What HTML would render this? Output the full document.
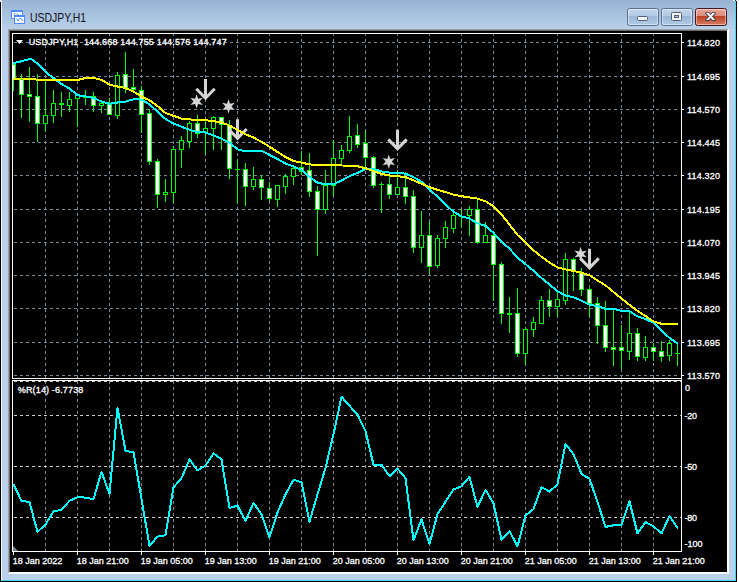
<!DOCTYPE html><html><head><meta charset="utf-8"><title>USDJPY,H1</title>
<style>html,body{margin:0;padding:0;background:#fff;overflow:hidden}svg{display:block}text{font-family:"Liberation Sans",Arial,sans-serif}</style></head><body>
<svg width="739" height="582" viewBox="0 0 739 582">
<defs>
<linearGradient id="tg" x1="0" y1="0" x2="0" y2="1"><stop offset="0" stop-color="#98b4d4"/><stop offset="1" stop-color="#b9d1ea"/></linearGradient>
<linearGradient id="bg" x1="0" y1="0" x2="0" y2="1"><stop offset="0" stop-color="#c4d7ec"/><stop offset="0.43" stop-color="#b3cae3"/><stop offset="0.47" stop-color="#9bb7d7"/><stop offset="1" stop-color="#b2cbe6"/></linearGradient>
<linearGradient id="cg" x1="0" y1="0" x2="0" y2="1"><stop offset="0" stop-color="#eaaa9b"/><stop offset="0.43" stop-color="#dc8b79"/><stop offset="0.47" stop-color="#bf4122"/><stop offset="1" stop-color="#d58068"/></linearGradient>
<clipPath id="cm"><rect x="13" y="34" width="668" height="344"/></clipPath>
<clipPath id="cs"><rect x="13" y="381" width="668" height="170"/></clipPath>
</defs>
<rect x="0" y="0" width="739" height="582" fill="#ffffff"/>
<rect x="0" y="0" width="737" height="582" fill="#000"/>
<rect x="1" y="0" width="735" height="581" fill="#b9d1ea"/>
<rect x="1" y="0" width="735" height="30" fill="url(#tg)"/>
<rect x="1" y="0" width="1" height="581" fill="#f4f8fc"/>
<rect x="735" y="1" width="1" height="580" fill="#3fd9f5"/>
<rect x="1" y="580" width="735" height="1" fill="#3fd9f5"/>
<rect x="0" y="0" width="2" height="2" fill="#dfe8f2"/>
<rect x="736" y="0" width="1" height="1" fill="#ffffff"/><rect x="735" y="0" width="1" height="1" fill="#223"/><rect x="733" y="0" width="2" height="1" fill="#d5f3fb"/>
<rect x="8" y="29" width="721" height="545" fill="#ffffff"/>
<rect x="8" y="29" width="720" height="544" fill="#a0a0a0"/>
<rect x="9" y="30" width="719" height="543" fill="#e3e3e3"/>
<rect x="9" y="30" width="718" height="542" fill="#696969"/>
<rect x="10" y="31" width="717" height="541" fill="#000"/>
<rect x="727" y="30" width="2" height="544" fill="#ffffff"/>
<rect x="9" y="572" width="720" height="2" fill="#ffffff"/>
<g shape-rendering="crispEdges">
<rect x="11" y="10" width="12" height="9" fill="#4c8bff"/><rect x="12" y="12" width="10" height="6" fill="#fff"/>
<rect x="14" y="15" width="11" height="9" fill="#4c8bff"/><rect x="15" y="17" width="9" height="6" fill="#fff"/>
</g>
<path d="M13.5 14.5 l1.5 -1 l1 1 M17 13.5 l1.5 1.5" stroke="#4c8bff" stroke-width="1" fill="none"/>
<path d="M16.5 18.5 l1.5 2.5 l1.5 -2.5 l1.5 0 l1.5 2.5" stroke="#4c8bff" stroke-width="1" fill="none"/>
<text x="30" y="22" font-size="12.5" fill="#101020" textLength="56" lengthAdjust="spacingAndGlyphs">USDJPY,H1</text>
<rect x="627.5" y="8.5" width="31" height="17" rx="2" ry="2" fill="url(#bg)" stroke="#5b7190" stroke-width="1"/>
<rect x="628.5" y="9.5" width="29" height="15" rx="1.5" ry="1.5" fill="none" stroke="#ffffff" stroke-opacity="0.45" stroke-width="1"/>
<rect x="661.5" y="8.5" width="31" height="17" rx="2" ry="2" fill="url(#bg)" stroke="#5b7190" stroke-width="1"/>
<rect x="662.5" y="9.5" width="29" height="15" rx="1.5" ry="1.5" fill="none" stroke="#ffffff" stroke-opacity="0.45" stroke-width="1"/>
<rect x="695.5" y="8.5" width="31" height="17" rx="2" ry="2" fill="url(#cg)" stroke="#4a1420" stroke-width="1"/>
<rect x="696.5" y="9.5" width="29" height="15" rx="1.5" ry="1.5" fill="none" stroke="#ffffff" stroke-opacity="0.45" stroke-width="1"/>
<rect x="637.5" y="16.5" width="10" height="4" rx="1" fill="#f4f6f9" stroke="#55606e" stroke-width="1"/>
<rect x="671.5" y="12.5" width="10" height="8" rx="1" fill="#f4f6f9" stroke="#55606e" stroke-width="1"/>
<rect x="674.5" y="15.5" width="4" height="2" fill="#a9c0da" stroke="#55606e" stroke-width="1"/>
<polygon points="706,13.1 708.7,13.1 715.2,20.1 712.5,20.1" fill="#3c4254" stroke="#3c4254" stroke-width="1.7" stroke-linejoin="round"/><polygon points="712.5,13.1 715.2,13.1 708.7,20.1 706,20.1" fill="#3c4254" stroke="#3c4254" stroke-width="1.7" stroke-linejoin="round"/>
<polygon points="706,13.1 708.7,13.1 715.2,20.1 712.5,20.1" fill="#f8f8f8"/><polygon points="712.5,13.1 715.2,13.1 708.7,20.1 706,20.1" fill="#f8f8f8"/>
<g shape-rendering="crispEdges">
<line x1="45.5" y1="34" x2="45.5" y2="378" stroke="#778899" stroke-width="1" stroke-dasharray="3 3" stroke-dashoffset="1"/>
<line x1="45.5" y1="381" x2="45.5" y2="551" stroke="#778899" stroke-width="1" stroke-dasharray="3 3" stroke-dashoffset="0"/>
<line x1="77.5" y1="34" x2="77.5" y2="378" stroke="#778899" stroke-width="1" stroke-dasharray="3 3" stroke-dashoffset="1"/>
<line x1="77.5" y1="381" x2="77.5" y2="551" stroke="#778899" stroke-width="1" stroke-dasharray="3 3" stroke-dashoffset="0"/>
<line x1="109.5" y1="34" x2="109.5" y2="378" stroke="#778899" stroke-width="1" stroke-dasharray="3 3" stroke-dashoffset="1"/>
<line x1="109.5" y1="381" x2="109.5" y2="551" stroke="#778899" stroke-width="1" stroke-dasharray="3 3" stroke-dashoffset="0"/>
<line x1="141.5" y1="34" x2="141.5" y2="378" stroke="#778899" stroke-width="1" stroke-dasharray="3 3" stroke-dashoffset="1"/>
<line x1="141.5" y1="381" x2="141.5" y2="551" stroke="#778899" stroke-width="1" stroke-dasharray="3 3" stroke-dashoffset="0"/>
<line x1="173.5" y1="34" x2="173.5" y2="378" stroke="#778899" stroke-width="1" stroke-dasharray="3 3" stroke-dashoffset="1"/>
<line x1="173.5" y1="381" x2="173.5" y2="551" stroke="#778899" stroke-width="1" stroke-dasharray="3 3" stroke-dashoffset="0"/>
<line x1="205.5" y1="34" x2="205.5" y2="378" stroke="#778899" stroke-width="1" stroke-dasharray="3 3" stroke-dashoffset="1"/>
<line x1="205.5" y1="381" x2="205.5" y2="551" stroke="#778899" stroke-width="1" stroke-dasharray="3 3" stroke-dashoffset="0"/>
<line x1="237.5" y1="34" x2="237.5" y2="378" stroke="#778899" stroke-width="1" stroke-dasharray="3 3" stroke-dashoffset="1"/>
<line x1="237.5" y1="381" x2="237.5" y2="551" stroke="#778899" stroke-width="1" stroke-dasharray="3 3" stroke-dashoffset="0"/>
<line x1="269.5" y1="34" x2="269.5" y2="378" stroke="#778899" stroke-width="1" stroke-dasharray="3 3" stroke-dashoffset="1"/>
<line x1="269.5" y1="381" x2="269.5" y2="551" stroke="#778899" stroke-width="1" stroke-dasharray="3 3" stroke-dashoffset="0"/>
<line x1="301.5" y1="34" x2="301.5" y2="378" stroke="#778899" stroke-width="1" stroke-dasharray="3 3" stroke-dashoffset="1"/>
<line x1="301.5" y1="381" x2="301.5" y2="551" stroke="#778899" stroke-width="1" stroke-dasharray="3 3" stroke-dashoffset="0"/>
<line x1="333.5" y1="34" x2="333.5" y2="378" stroke="#778899" stroke-width="1" stroke-dasharray="3 3" stroke-dashoffset="1"/>
<line x1="333.5" y1="381" x2="333.5" y2="551" stroke="#778899" stroke-width="1" stroke-dasharray="3 3" stroke-dashoffset="0"/>
<line x1="365.5" y1="34" x2="365.5" y2="378" stroke="#778899" stroke-width="1" stroke-dasharray="3 3" stroke-dashoffset="1"/>
<line x1="365.5" y1="381" x2="365.5" y2="551" stroke="#778899" stroke-width="1" stroke-dasharray="3 3" stroke-dashoffset="0"/>
<line x1="397.5" y1="34" x2="397.5" y2="378" stroke="#778899" stroke-width="1" stroke-dasharray="3 3" stroke-dashoffset="1"/>
<line x1="397.5" y1="381" x2="397.5" y2="551" stroke="#778899" stroke-width="1" stroke-dasharray="3 3" stroke-dashoffset="0"/>
<line x1="429.5" y1="34" x2="429.5" y2="378" stroke="#778899" stroke-width="1" stroke-dasharray="3 3" stroke-dashoffset="1"/>
<line x1="429.5" y1="381" x2="429.5" y2="551" stroke="#778899" stroke-width="1" stroke-dasharray="3 3" stroke-dashoffset="0"/>
<line x1="461.5" y1="34" x2="461.5" y2="378" stroke="#778899" stroke-width="1" stroke-dasharray="3 3" stroke-dashoffset="1"/>
<line x1="461.5" y1="381" x2="461.5" y2="551" stroke="#778899" stroke-width="1" stroke-dasharray="3 3" stroke-dashoffset="0"/>
<line x1="493.5" y1="34" x2="493.5" y2="378" stroke="#778899" stroke-width="1" stroke-dasharray="3 3" stroke-dashoffset="1"/>
<line x1="493.5" y1="381" x2="493.5" y2="551" stroke="#778899" stroke-width="1" stroke-dasharray="3 3" stroke-dashoffset="0"/>
<line x1="525.5" y1="34" x2="525.5" y2="378" stroke="#778899" stroke-width="1" stroke-dasharray="3 3" stroke-dashoffset="1"/>
<line x1="525.5" y1="381" x2="525.5" y2="551" stroke="#778899" stroke-width="1" stroke-dasharray="3 3" stroke-dashoffset="0"/>
<line x1="557.5" y1="34" x2="557.5" y2="378" stroke="#778899" stroke-width="1" stroke-dasharray="3 3" stroke-dashoffset="1"/>
<line x1="557.5" y1="381" x2="557.5" y2="551" stroke="#778899" stroke-width="1" stroke-dasharray="3 3" stroke-dashoffset="0"/>
<line x1="589.5" y1="34" x2="589.5" y2="378" stroke="#778899" stroke-width="1" stroke-dasharray="3 3" stroke-dashoffset="1"/>
<line x1="589.5" y1="381" x2="589.5" y2="551" stroke="#778899" stroke-width="1" stroke-dasharray="3 3" stroke-dashoffset="0"/>
<line x1="621.5" y1="34" x2="621.5" y2="378" stroke="#778899" stroke-width="1" stroke-dasharray="3 3" stroke-dashoffset="1"/>
<line x1="621.5" y1="381" x2="621.5" y2="551" stroke="#778899" stroke-width="1" stroke-dasharray="3 3" stroke-dashoffset="0"/>
<line x1="653.5" y1="34" x2="653.5" y2="378" stroke="#778899" stroke-width="1" stroke-dasharray="3 3" stroke-dashoffset="1"/>
<line x1="653.5" y1="381" x2="653.5" y2="551" stroke="#778899" stroke-width="1" stroke-dasharray="3 3" stroke-dashoffset="0"/>
<line x1="13" y1="42.5" x2="678" y2="42.5" stroke="#778899" stroke-width="1" stroke-dasharray="3 3" stroke-dashoffset="5"/>
<rect x="681" y="42" width="3" height="1" fill="#fff"/>
<line x1="13" y1="76.5" x2="678" y2="76.5" stroke="#778899" stroke-width="1" stroke-dasharray="3 3" stroke-dashoffset="5"/>
<rect x="681" y="76" width="3" height="1" fill="#fff"/>
<line x1="13" y1="109.5" x2="678" y2="109.5" stroke="#778899" stroke-width="1" stroke-dasharray="3 3" stroke-dashoffset="5"/>
<rect x="681" y="109" width="3" height="1" fill="#fff"/>
<line x1="13" y1="142.5" x2="678" y2="142.5" stroke="#778899" stroke-width="1" stroke-dasharray="3 3" stroke-dashoffset="5"/>
<rect x="681" y="142" width="3" height="1" fill="#fff"/>
<line x1="13" y1="175.5" x2="678" y2="175.5" stroke="#778899" stroke-width="1" stroke-dasharray="3 3" stroke-dashoffset="5"/>
<rect x="681" y="175" width="3" height="1" fill="#fff"/>
<line x1="13" y1="209.5" x2="678" y2="209.5" stroke="#778899" stroke-width="1" stroke-dasharray="3 3" stroke-dashoffset="5"/>
<rect x="681" y="209" width="3" height="1" fill="#fff"/>
<line x1="13" y1="242.5" x2="678" y2="242.5" stroke="#778899" stroke-width="1" stroke-dasharray="3 3" stroke-dashoffset="5"/>
<rect x="681" y="242" width="3" height="1" fill="#fff"/>
<line x1="13" y1="275.5" x2="678" y2="275.5" stroke="#778899" stroke-width="1" stroke-dasharray="3 3" stroke-dashoffset="5"/>
<rect x="681" y="275" width="3" height="1" fill="#fff"/>
<line x1="13" y1="308.5" x2="678" y2="308.5" stroke="#778899" stroke-width="1" stroke-dasharray="3 3" stroke-dashoffset="5"/>
<rect x="681" y="308" width="3" height="1" fill="#fff"/>
<line x1="13" y1="342.5" x2="678" y2="342.5" stroke="#778899" stroke-width="1" stroke-dasharray="3 3" stroke-dashoffset="5"/>
<rect x="681" y="342" width="3" height="1" fill="#fff"/>
<line x1="13" y1="375.5" x2="678" y2="375.5" stroke="#778899" stroke-width="1" stroke-dasharray="3 3" stroke-dashoffset="5"/>
<rect x="681" y="375" width="3" height="1" fill="#fff"/>
<line x1="13" y1="381.5" x2="681" y2="381.5" stroke="#cccccc" stroke-width="1" stroke-dasharray="3 3" stroke-dashoffset="5"/>
<line x1="13" y1="415.5" x2="681" y2="415.5" stroke="#cccccc" stroke-width="1" stroke-dasharray="3 3" stroke-dashoffset="5"/>
<line x1="13" y1="466.5" x2="681" y2="466.5" stroke="#cccccc" stroke-width="1" stroke-dasharray="3 3" stroke-dashoffset="5"/>
<line x1="13" y1="517.5" x2="681" y2="517.5" stroke="#cccccc" stroke-width="1" stroke-dasharray="3 3" stroke-dashoffset="5"/>
</g>
<g shape-rendering="crispEdges" clip-path="url(#cm)">
<rect x="13" y="64" width="1" height="27" fill="#00ff00"/>
<rect x="11" y="64" width="5" height="15" fill="#00ff00"/>
<rect x="12" y="65" width="3" height="13" fill="#ffffff"/>
<rect x="21" y="74" width="1" height="44" fill="#00ff00"/>
<rect x="19" y="79" width="5" height="16" fill="#00ff00"/>
<rect x="20" y="80" width="3" height="14" fill="#ffffff"/>
<rect x="29" y="67" width="1" height="55" fill="#00ff00"/>
<rect x="27" y="94" width="5" height="3" fill="#00ff00"/>
<rect x="28" y="95" width="3" height="1" fill="#ffffff"/>
<rect x="37" y="74" width="1" height="68" fill="#00ff00"/>
<rect x="35" y="96" width="5" height="28" fill="#00ff00"/>
<rect x="36" y="97" width="3" height="26" fill="#ffffff"/>
<rect x="45" y="81" width="1" height="51" fill="#00ff00"/>
<rect x="43" y="115" width="5" height="9" fill="#00ff00"/>
<rect x="44" y="116" width="3" height="7" fill="#000000"/>
<rect x="53" y="90" width="1" height="33" fill="#00ff00"/>
<rect x="51" y="103" width="5" height="13" fill="#00ff00"/>
<rect x="52" y="104" width="3" height="11" fill="#000000"/>
<rect x="61" y="92" width="1" height="25" fill="#00ff00"/>
<rect x="59" y="103" width="5" height="2" fill="#00ff00"/>
<rect x="69" y="92" width="1" height="20" fill="#00ff00"/>
<rect x="67" y="99" width="5" height="7" fill="#00ff00"/>
<rect x="68" y="100" width="3" height="5" fill="#000000"/>
<rect x="77" y="94" width="1" height="33" fill="#00ff00"/>
<rect x="75" y="95" width="5" height="4" fill="#00ff00"/>
<rect x="76" y="96" width="3" height="2" fill="#000000"/>
<rect x="85" y="90" width="1" height="15" fill="#00ff00"/>
<rect x="83" y="97" width="5" height="1" fill="#00ff00"/>
<rect x="93" y="92" width="1" height="20" fill="#00ff00"/>
<rect x="91" y="96" width="5" height="10" fill="#00ff00"/>
<rect x="92" y="97" width="3" height="8" fill="#ffffff"/>
<rect x="101" y="101" width="1" height="12" fill="#00ff00"/>
<rect x="99" y="103" width="5" height="3" fill="#00ff00"/>
<rect x="100" y="104" width="3" height="1" fill="#000000"/>
<rect x="109" y="98" width="1" height="17" fill="#00ff00"/>
<rect x="107" y="104" width="5" height="11" fill="#00ff00"/>
<rect x="108" y="105" width="3" height="9" fill="#ffffff"/>
<rect x="117" y="72" width="1" height="47" fill="#00ff00"/>
<rect x="115" y="75" width="5" height="41" fill="#00ff00"/>
<rect x="116" y="76" width="3" height="39" fill="#000000"/>
<rect x="125" y="52" width="1" height="41" fill="#00ff00"/>
<rect x="123" y="74" width="5" height="15" fill="#00ff00"/>
<rect x="124" y="75" width="3" height="13" fill="#ffffff"/>
<rect x="133" y="69" width="1" height="21" fill="#00ff00"/>
<rect x="131" y="87" width="5" height="3" fill="#00ff00"/>
<rect x="132" y="88" width="3" height="1" fill="#ffffff"/>
<rect x="141" y="86" width="1" height="47" fill="#00ff00"/>
<rect x="139" y="90" width="5" height="25" fill="#00ff00"/>
<rect x="140" y="91" width="3" height="23" fill="#ffffff"/>
<rect x="149" y="109" width="1" height="56" fill="#00ff00"/>
<rect x="147" y="113" width="5" height="49" fill="#00ff00"/>
<rect x="148" y="114" width="3" height="47" fill="#ffffff"/>
<rect x="157" y="159" width="1" height="49" fill="#00ff00"/>
<rect x="155" y="161" width="5" height="34" fill="#00ff00"/>
<rect x="156" y="162" width="3" height="32" fill="#ffffff"/>
<rect x="165" y="179" width="1" height="23" fill="#00ff00"/>
<rect x="163" y="192" width="5" height="3" fill="#00ff00"/>
<rect x="164" y="193" width="3" height="1" fill="#000000"/>
<rect x="173" y="146" width="1" height="57" fill="#00ff00"/>
<rect x="171" y="149" width="5" height="44" fill="#00ff00"/>
<rect x="172" y="150" width="3" height="42" fill="#000000"/>
<rect x="181" y="136" width="1" height="32" fill="#00ff00"/>
<rect x="179" y="140" width="5" height="10" fill="#00ff00"/>
<rect x="180" y="141" width="3" height="8" fill="#000000"/>
<rect x="189" y="121" width="1" height="27" fill="#00ff00"/>
<rect x="187" y="123" width="5" height="19" fill="#00ff00"/>
<rect x="188" y="124" width="3" height="17" fill="#000000"/>
<rect x="197" y="115" width="1" height="23" fill="#00ff00"/>
<rect x="195" y="123" width="5" height="11" fill="#00ff00"/>
<rect x="196" y="124" width="3" height="9" fill="#ffffff"/>
<rect x="205" y="119" width="1" height="35" fill="#00ff00"/>
<rect x="203" y="128" width="5" height="5" fill="#00ff00"/>
<rect x="204" y="129" width="3" height="3" fill="#000000"/>
<rect x="213" y="116" width="1" height="34" fill="#00ff00"/>
<rect x="211" y="117" width="5" height="12" fill="#00ff00"/>
<rect x="212" y="118" width="3" height="10" fill="#000000"/>
<rect x="221" y="117" width="1" height="33" fill="#00ff00"/>
<rect x="219" y="117" width="5" height="8" fill="#00ff00"/>
<rect x="220" y="118" width="3" height="6" fill="#ffffff"/>
<rect x="229" y="120" width="1" height="59" fill="#00ff00"/>
<rect x="227" y="125" width="5" height="44" fill="#00ff00"/>
<rect x="228" y="126" width="3" height="42" fill="#ffffff"/>
<rect x="237" y="159" width="1" height="45" fill="#00ff00"/>
<rect x="235" y="169" width="5" height="1" fill="#00ff00"/>
<rect x="245" y="163" width="1" height="43" fill="#00ff00"/>
<rect x="243" y="169" width="5" height="18" fill="#00ff00"/>
<rect x="244" y="170" width="3" height="16" fill="#ffffff"/>
<rect x="253" y="167" width="1" height="23" fill="#00ff00"/>
<rect x="251" y="179" width="5" height="8" fill="#00ff00"/>
<rect x="252" y="180" width="3" height="6" fill="#000000"/>
<rect x="261" y="175" width="1" height="25" fill="#00ff00"/>
<rect x="259" y="179" width="5" height="9" fill="#00ff00"/>
<rect x="260" y="180" width="3" height="7" fill="#ffffff"/>
<rect x="269" y="182" width="1" height="19" fill="#00ff00"/>
<rect x="267" y="188" width="5" height="11" fill="#00ff00"/>
<rect x="268" y="189" width="3" height="9" fill="#ffffff"/>
<rect x="277" y="185" width="1" height="22" fill="#00ff00"/>
<rect x="275" y="185" width="5" height="15" fill="#00ff00"/>
<rect x="276" y="186" width="3" height="13" fill="#000000"/>
<rect x="285" y="174" width="1" height="20" fill="#00ff00"/>
<rect x="283" y="176" width="5" height="11" fill="#00ff00"/>
<rect x="284" y="177" width="3" height="9" fill="#000000"/>
<rect x="293" y="166" width="1" height="19" fill="#00ff00"/>
<rect x="291" y="168" width="5" height="9" fill="#00ff00"/>
<rect x="292" y="169" width="3" height="7" fill="#000000"/>
<rect x="301" y="151" width="1" height="24" fill="#00ff00"/>
<rect x="299" y="167" width="5" height="5" fill="#00ff00"/>
<rect x="300" y="168" width="3" height="3" fill="#ffffff"/>
<rect x="309" y="153" width="1" height="44" fill="#00ff00"/>
<rect x="307" y="170" width="5" height="22" fill="#00ff00"/>
<rect x="308" y="171" width="3" height="20" fill="#ffffff"/>
<rect x="317" y="186" width="1" height="70" fill="#00ff00"/>
<rect x="315" y="191" width="5" height="19" fill="#00ff00"/>
<rect x="316" y="192" width="3" height="17" fill="#ffffff"/>
<rect x="325" y="170" width="1" height="44" fill="#00ff00"/>
<rect x="323" y="185" width="5" height="25" fill="#00ff00"/>
<rect x="324" y="186" width="3" height="23" fill="#000000"/>
<rect x="333" y="140" width="1" height="56" fill="#00ff00"/>
<rect x="331" y="158" width="5" height="28" fill="#00ff00"/>
<rect x="332" y="159" width="3" height="26" fill="#000000"/>
<rect x="341" y="145" width="1" height="19" fill="#00ff00"/>
<rect x="339" y="150" width="5" height="9" fill="#00ff00"/>
<rect x="340" y="151" width="3" height="7" fill="#000000"/>
<rect x="349" y="116" width="1" height="37" fill="#00ff00"/>
<rect x="347" y="136" width="5" height="15" fill="#00ff00"/>
<rect x="348" y="137" width="3" height="13" fill="#000000"/>
<rect x="357" y="124" width="1" height="24" fill="#00ff00"/>
<rect x="355" y="135" width="5" height="10" fill="#00ff00"/>
<rect x="356" y="136" width="3" height="8" fill="#ffffff"/>
<rect x="365" y="130" width="1" height="40" fill="#00ff00"/>
<rect x="363" y="143" width="5" height="15" fill="#00ff00"/>
<rect x="364" y="144" width="3" height="13" fill="#ffffff"/>
<rect x="373" y="156" width="1" height="32" fill="#00ff00"/>
<rect x="371" y="157" width="5" height="29" fill="#00ff00"/>
<rect x="372" y="158" width="3" height="27" fill="#ffffff"/>
<rect x="381" y="182" width="1" height="31" fill="#00ff00"/>
<rect x="379" y="184" width="5" height="1" fill="#00ff00"/>
<rect x="389" y="173" width="1" height="26" fill="#00ff00"/>
<rect x="387" y="184" width="5" height="11" fill="#00ff00"/>
<rect x="388" y="185" width="3" height="9" fill="#ffffff"/>
<rect x="397" y="170" width="1" height="25" fill="#00ff00"/>
<rect x="395" y="187" width="5" height="8" fill="#00ff00"/>
<rect x="396" y="188" width="3" height="6" fill="#000000"/>
<rect x="405" y="172" width="1" height="32" fill="#00ff00"/>
<rect x="403" y="187" width="5" height="10" fill="#00ff00"/>
<rect x="404" y="188" width="3" height="8" fill="#ffffff"/>
<rect x="413" y="190" width="1" height="63" fill="#00ff00"/>
<rect x="411" y="196" width="5" height="52" fill="#00ff00"/>
<rect x="412" y="197" width="3" height="50" fill="#ffffff"/>
<rect x="421" y="211" width="1" height="52" fill="#00ff00"/>
<rect x="419" y="235" width="5" height="13" fill="#00ff00"/>
<rect x="420" y="236" width="3" height="11" fill="#000000"/>
<rect x="429" y="222" width="1" height="52" fill="#00ff00"/>
<rect x="427" y="235" width="5" height="32" fill="#00ff00"/>
<rect x="428" y="236" width="3" height="30" fill="#ffffff"/>
<rect x="437" y="235" width="1" height="33" fill="#00ff00"/>
<rect x="435" y="238" width="5" height="28" fill="#00ff00"/>
<rect x="436" y="239" width="3" height="26" fill="#000000"/>
<rect x="445" y="221" width="1" height="27" fill="#00ff00"/>
<rect x="443" y="227" width="5" height="12" fill="#00ff00"/>
<rect x="444" y="228" width="3" height="10" fill="#000000"/>
<rect x="453" y="213" width="1" height="20" fill="#00ff00"/>
<rect x="451" y="215" width="5" height="14" fill="#00ff00"/>
<rect x="452" y="216" width="3" height="12" fill="#000000"/>
<rect x="461" y="209" width="1" height="19" fill="#00ff00"/>
<rect x="459" y="216" width="5" height="1" fill="#00ff00"/>
<rect x="469" y="206" width="1" height="30" fill="#00ff00"/>
<rect x="467" y="209" width="5" height="7" fill="#00ff00"/>
<rect x="468" y="210" width="3" height="5" fill="#000000"/>
<rect x="477" y="199" width="1" height="45" fill="#00ff00"/>
<rect x="475" y="209" width="5" height="34" fill="#00ff00"/>
<rect x="476" y="210" width="3" height="32" fill="#ffffff"/>
<rect x="485" y="222" width="1" height="21" fill="#00ff00"/>
<rect x="483" y="235" width="5" height="8" fill="#00ff00"/>
<rect x="484" y="236" width="3" height="6" fill="#000000"/>
<rect x="493" y="234" width="1" height="67" fill="#00ff00"/>
<rect x="491" y="235" width="5" height="30" fill="#00ff00"/>
<rect x="492" y="236" width="3" height="28" fill="#ffffff"/>
<rect x="501" y="262" width="1" height="62" fill="#00ff00"/>
<rect x="499" y="264" width="5" height="50" fill="#00ff00"/>
<rect x="500" y="265" width="3" height="48" fill="#ffffff"/>
<rect x="509" y="297" width="1" height="36" fill="#00ff00"/>
<rect x="507" y="313" width="5" height="2" fill="#00ff00"/>
<rect x="517" y="288" width="1" height="69" fill="#00ff00"/>
<rect x="515" y="313" width="5" height="41" fill="#00ff00"/>
<rect x="516" y="314" width="3" height="39" fill="#ffffff"/>
<rect x="525" y="327" width="1" height="38" fill="#00ff00"/>
<rect x="523" y="329" width="5" height="25" fill="#00ff00"/>
<rect x="524" y="330" width="3" height="23" fill="#000000"/>
<rect x="533" y="317" width="1" height="20" fill="#00ff00"/>
<rect x="531" y="322" width="5" height="8" fill="#00ff00"/>
<rect x="532" y="323" width="3" height="6" fill="#000000"/>
<rect x="541" y="296" width="1" height="28" fill="#00ff00"/>
<rect x="539" y="300" width="5" height="24" fill="#00ff00"/>
<rect x="540" y="301" width="3" height="22" fill="#000000"/>
<rect x="549" y="289" width="1" height="28" fill="#00ff00"/>
<rect x="547" y="300" width="5" height="7" fill="#00ff00"/>
<rect x="548" y="301" width="3" height="5" fill="#ffffff"/>
<rect x="557" y="291" width="1" height="26" fill="#00ff00"/>
<rect x="555" y="299" width="5" height="8" fill="#00ff00"/>
<rect x="556" y="300" width="3" height="6" fill="#000000"/>
<rect x="565" y="253" width="1" height="52" fill="#00ff00"/>
<rect x="563" y="259" width="5" height="42" fill="#00ff00"/>
<rect x="564" y="260" width="3" height="40" fill="#000000"/>
<rect x="573" y="258" width="1" height="33" fill="#00ff00"/>
<rect x="571" y="259" width="5" height="13" fill="#00ff00"/>
<rect x="572" y="260" width="3" height="11" fill="#ffffff"/>
<rect x="581" y="268" width="1" height="28" fill="#00ff00"/>
<rect x="579" y="272" width="5" height="18" fill="#00ff00"/>
<rect x="580" y="273" width="3" height="16" fill="#ffffff"/>
<rect x="589" y="288" width="1" height="29" fill="#00ff00"/>
<rect x="587" y="289" width="5" height="15" fill="#00ff00"/>
<rect x="588" y="290" width="3" height="13" fill="#ffffff"/>
<rect x="597" y="297" width="1" height="47" fill="#00ff00"/>
<rect x="595" y="303" width="5" height="23" fill="#00ff00"/>
<rect x="596" y="304" width="3" height="21" fill="#ffffff"/>
<rect x="605" y="301" width="1" height="51" fill="#00ff00"/>
<rect x="603" y="325" width="5" height="23" fill="#00ff00"/>
<rect x="604" y="326" width="3" height="21" fill="#ffffff"/>
<rect x="613" y="310" width="1" height="56" fill="#00ff00"/>
<rect x="611" y="347" width="5" height="3" fill="#00ff00"/>
<rect x="612" y="348" width="3" height="1" fill="#ffffff"/>
<rect x="621" y="325" width="1" height="44" fill="#00ff00"/>
<rect x="619" y="347" width="5" height="4" fill="#00ff00"/>
<rect x="620" y="348" width="3" height="2" fill="#ffffff"/>
<rect x="629" y="312" width="1" height="48" fill="#00ff00"/>
<rect x="627" y="333" width="5" height="19" fill="#00ff00"/>
<rect x="628" y="334" width="3" height="17" fill="#000000"/>
<rect x="637" y="328" width="1" height="33" fill="#00ff00"/>
<rect x="635" y="333" width="5" height="24" fill="#00ff00"/>
<rect x="636" y="334" width="3" height="22" fill="#ffffff"/>
<rect x="645" y="336" width="1" height="25" fill="#00ff00"/>
<rect x="643" y="347" width="5" height="11" fill="#00ff00"/>
<rect x="644" y="348" width="3" height="9" fill="#000000"/>
<rect x="653" y="343" width="1" height="18" fill="#00ff00"/>
<rect x="651" y="347" width="5" height="5" fill="#00ff00"/>
<rect x="652" y="348" width="3" height="3" fill="#ffffff"/>
<rect x="661" y="341" width="1" height="21" fill="#00ff00"/>
<rect x="659" y="351" width="5" height="6" fill="#00ff00"/>
<rect x="660" y="352" width="3" height="4" fill="#ffffff"/>
<rect x="669" y="340" width="1" height="21" fill="#00ff00"/>
<rect x="667" y="343" width="5" height="13" fill="#00ff00"/>
<rect x="668" y="344" width="3" height="11" fill="#000000"/>
<rect x="677" y="343" width="1" height="23" fill="#00ff00"/>
<rect x="675" y="353" width="5" height="1" fill="#00ff00"/>
</g>
<g clip-path="url(#cm)">
<path d="M205.5 79.10000000000001 L205.5 98.4 M196.3 88.80000000000001 L205.5 98.2 L214.7 88.80000000000001" stroke="#d6d6d6" stroke-width="3" fill="none" stroke-linejoin="miter" stroke-miterlimit="10"/>
<path d="M237.5 119.3 L237.5 138.6 M228.3 129.0 L237.5 138.4 L246.7 129.0" stroke="#d6d6d6" stroke-width="3" fill="none" stroke-linejoin="miter" stroke-miterlimit="10"/>
<path d="M397.5 129.7 L397.5 149 M388.3 139.4 L397.5 148.8 L406.7 139.4" stroke="#d6d6d6" stroke-width="3" fill="none" stroke-linejoin="miter" stroke-miterlimit="10"/>
<path d="M589.5 248.7 L589.5 268 M580.3 258.4 L589.5 267.8 L598.7 258.4" stroke="#d6d6d6" stroke-width="3" fill="none" stroke-linejoin="miter" stroke-miterlimit="10"/>
<polygon points="196.60,94.20 198.10,98.80 202.84,97.80 199.60,101.40 202.84,105.00 198.10,104.00 196.60,108.60 195.10,104.00 190.36,105.00 193.60,101.40 190.36,97.80 195.10,98.80" fill="#d6d6d6"/>
<polygon points="228.50,99.20 230.00,103.80 234.74,102.80 231.50,106.40 234.74,110.00 230.00,109.00 228.50,113.60 227.00,109.00 222.26,110.00 225.50,106.40 222.26,102.80 227.00,103.80" fill="#d6d6d6"/>
<polygon points="388.80,154.40 390.30,159.00 395.04,158.00 391.80,161.60 395.04,165.20 390.30,164.20 388.80,168.80 387.30,164.20 382.56,165.20 385.80,161.60 382.56,158.00 387.30,159.00" fill="#d6d6d6"/>
<polygon points="580.60,246.80 582.10,251.40 586.84,250.40 583.60,254.00 586.84,257.60 582.10,256.60 580.60,261.20 579.10,256.60 574.36,257.60 577.60,254.00 574.36,250.40 579.10,251.40" fill="#d6d6d6"/>
</g>
<polyline points="13,63 13.5,63 21.5,61.3 29.5,59 32,59.6 37.5,63.6 45.5,72 53.5,78 61.5,84 69.5,88.6 77.5,95.2 85.5,96.4 93.5,98.1 101.5,101.5 109.5,103.8 117.5,102.5 125.5,101.6 133.5,99.3 141.5,99.6 149.5,104.5 157.5,111.6 165.5,119 173.5,123.5 181.5,126.8 189.5,129.7 197.5,132.2 205.5,132.5 213.5,135.4 221.5,138.7 229.5,142.8 237.5,149.3 245.5,151.3 253.5,151 261.5,150.8 269.5,154.9 277.5,159 285.5,163.6 293.5,166.3 301.5,170 309.5,177 317.5,182.7 325.5,184.3 333.5,184.3 341.5,180.5 349.5,176.1 357.5,172.9 365.5,169 373.5,169 381.5,171.4 389.5,172.6 397.5,173 405.5,173.6 413.5,177.1 421.5,181.7 429.5,189.6 437.5,196.7 445.5,204.7 453.5,211.6 461.5,216.3 469.5,218.5 477.5,223.4 485.5,225.8 493.5,232.8 501.5,241.7 509.5,248.7 517.5,257.6 525.5,264.2 533.5,270.7 541.5,278 549.5,284.6 557.5,291.3 565.5,295.5 573.5,297.2 581.5,300.7 589.5,304.7 597.5,306.2 605.5,308.8 613.5,308.8 621.5,310.8 629.5,311.2 637.5,316.4 645.5,319 653.5,322.8 661.5,330.7 669.5,337.9 677.5,343.5 678,343.5" fill="none" stroke="#00ffff" stroke-width="2" shape-rendering="crispEdges" stroke-linejoin="round" clip-path="url(#cm)"/>
<polyline points="13,79 13.5,79 21.5,78.5 29.5,78.6 37.5,79.7 45.5,80 53.5,80 61.5,80 69.5,80 77.5,80 85.5,78 93.5,78 101.5,79.8 109.5,84.6 117.5,86.5 125.5,88 133.5,91.5 141.5,96.5 149.5,100.3 157.5,106 165.5,113 173.5,115.8 181.5,118.6 189.5,119.4 197.5,120 205.5,120.2 213.5,121.2 221.5,122.4 229.5,125.6 237.5,129.7 245.5,134.3 253.5,137.5 261.5,141.8 269.5,146.7 277.5,152 285.5,157 293.5,161 301.5,162.6 309.5,164.4 317.5,165 325.5,165 333.5,165 341.5,165.5 349.5,165.6 357.5,166.3 365.5,168.2 373.5,171 381.5,173.9 389.5,175.5 397.5,176.3 405.5,177.1 413.5,180.4 421.5,183.7 429.5,187.2 437.5,189.9 445.5,192 453.5,194.6 461.5,196.2 469.5,197.4 477.5,198.6 485.5,201.3 493.5,206.2 501.5,214.4 509.5,224.6 517.5,235 525.5,242.1 533.5,250.3 541.5,256.8 549.5,262.6 557.5,267.4 565.5,269.4 573.5,271 581.5,272.7 589.5,275.3 597.5,280.5 605.5,285.3 613.5,292 621.5,298.6 629.5,304.9 637.5,310.8 645.5,316 653.5,321.4 661.5,323.8 669.5,324 677.5,324 678,324" fill="none" stroke="#ffff00" stroke-width="2" shape-rendering="crispEdges" stroke-linejoin="round" clip-path="url(#cm)"/>
<polyline points="13,484.5 13.5,484.5 21.5,500.8 29.5,502.1 37.5,531.8 45.5,524.5 53.5,511.4 61.5,509.8 69.5,500.8 77.5,497.2 85.5,497.6 93.5,499.2 101.5,471.8 109.5,494 117.5,407.7 125.5,450.8 133.5,452.4 141.5,499 149.5,545.7 157.5,536.6 165.5,535.3 173.5,487.4 181.5,478.3 189.5,459.4 197.5,470.3 205.5,465.5 213.5,453.5 221.5,459.4 229.5,508.1 237.5,505.5 245.5,521 253.5,502.8 261.5,514.5 269.5,537.4 277.5,512.5 285.5,494.4 293.5,479.8 301.5,482.2 309.5,521.6 317.5,494.4 325.5,468 333.5,434.2 341.5,396.7 349.5,405.8 357.5,414.6 365.5,431 373.5,464.8 381.5,464.8 389.5,476.1 397.5,468.7 405.5,478.2 413.5,540.2 421.5,519.5 429.5,543.9 437.5,514.2 445.5,501.7 453.5,489.5 461.5,486.2 469.5,476.8 477.5,507 485.5,489.8 493.5,503.3 501.5,539.8 509.5,531 517.5,546.4 525.5,515.5 533.5,509 541.5,487.1 549.5,491.5 557.5,484.5 565.5,443.9 573.5,454.2 581.5,474 589.5,478.8 597.5,502 605.5,526.9 613.5,525.3 621.5,524.9 629.5,501.3 637.5,533.4 645.5,522 653.5,526.4 661.5,533.3 669.5,516 677.5,528 678,528" fill="none" stroke="#00ffff" stroke-width="2" shape-rendering="crispEdges" stroke-linejoin="round" clip-path="url(#cs)"/>
<g shape-rendering="crispEdges" fill="#fff">
<rect x="12" y="33" width="670" height="1"/><rect x="12" y="378" width="670" height="1"/><rect x="12" y="33" width="1" height="346"/>
<rect x="12" y="380" width="670" height="1"/><rect x="12" y="551" width="670" height="1"/><rect x="12" y="380" width="1" height="172"/>
<rect x="681" y="33" width="1" height="519"/>
<rect x="13" y="552" width="1" height="3"/>
<rect x="77" y="552" width="1" height="3"/>
<rect x="141" y="552" width="1" height="3"/>
<rect x="205" y="552" width="1" height="3"/>
<rect x="269" y="552" width="1" height="3"/>
<rect x="333" y="552" width="1" height="3"/>
<rect x="397" y="552" width="1" height="3"/>
<rect x="461" y="552" width="1" height="3"/>
<rect x="525" y="552" width="1" height="3"/>
<rect x="589" y="552" width="1" height="3"/>
<rect x="653" y="552" width="1" height="3"/>
</g>
<polygon points="13,546 13,551 18,551" fill="#778899"/>
<text x="687" y="46" font-size="9" fill="#ffffff" stroke="#ffffff" stroke-width="0.3" textLength="33" lengthAdjust="spacing" xml:space="preserve">114.820</text>
<text x="687" y="80" font-size="9" fill="#ffffff" stroke="#ffffff" stroke-width="0.3" textLength="33" lengthAdjust="spacing" xml:space="preserve">114.695</text>
<text x="687" y="113" font-size="9" fill="#ffffff" stroke="#ffffff" stroke-width="0.3" textLength="33" lengthAdjust="spacing" xml:space="preserve">114.570</text>
<text x="687" y="146" font-size="9" fill="#ffffff" stroke="#ffffff" stroke-width="0.3" textLength="33" lengthAdjust="spacing" xml:space="preserve">114.445</text>
<text x="687" y="179" font-size="9" fill="#ffffff" stroke="#ffffff" stroke-width="0.3" textLength="33" lengthAdjust="spacing" xml:space="preserve">114.320</text>
<text x="687" y="213" font-size="9" fill="#ffffff" stroke="#ffffff" stroke-width="0.3" textLength="33" lengthAdjust="spacing" xml:space="preserve">114.195</text>
<text x="687" y="246" font-size="9" fill="#ffffff" stroke="#ffffff" stroke-width="0.3" textLength="33" lengthAdjust="spacing" xml:space="preserve">114.070</text>
<text x="687" y="279" font-size="9" fill="#ffffff" stroke="#ffffff" stroke-width="0.3" textLength="33" lengthAdjust="spacing" xml:space="preserve">113.945</text>
<text x="687" y="312" font-size="9" fill="#ffffff" stroke="#ffffff" stroke-width="0.3" textLength="33" lengthAdjust="spacing" xml:space="preserve">113.820</text>
<text x="687" y="346" font-size="9" fill="#ffffff" stroke="#ffffff" stroke-width="0.3" textLength="33" lengthAdjust="spacing" xml:space="preserve">113.695</text>
<text x="687" y="379" font-size="9" fill="#ffffff" stroke="#ffffff" stroke-width="0.3" textLength="33" lengthAdjust="spacing" xml:space="preserve">113.570</text>
<text x="685" y="391.0" font-size="9" fill="#ffffff" stroke="#ffffff" stroke-width="0.3" textLength="5" lengthAdjust="spacing" xml:space="preserve">0</text>
<text x="684.5" y="419.0" font-size="9" fill="#ffffff" stroke="#ffffff" stroke-width="0.3" textLength="12.5" lengthAdjust="spacing" xml:space="preserve">-20</text>
<text x="684.5" y="470.0" font-size="9" fill="#ffffff" stroke="#ffffff" stroke-width="0.3" textLength="12.5" lengthAdjust="spacing" xml:space="preserve">-50</text>
<text x="684.5" y="521.0" font-size="9" fill="#ffffff" stroke="#ffffff" stroke-width="0.3" textLength="12.5" lengthAdjust="spacing" xml:space="preserve">-80</text>
<text x="684.5" y="547.0" font-size="9" fill="#ffffff" stroke="#ffffff" stroke-width="0.3" textLength="18" lengthAdjust="spacing" xml:space="preserve">-100</text>
<text x="12.7" y="564" font-size="9" fill="#ffffff" stroke="#ffffff" stroke-width="0.3" textLength="49.5" lengthAdjust="spacing" xml:space="preserve">18 Jan 2022</text>
<text x="76.7" y="564" font-size="9" fill="#ffffff" stroke="#ffffff" stroke-width="0.3" textLength="52" lengthAdjust="spacing" xml:space="preserve">18 Jan 21:00</text>
<text x="140.7" y="564" font-size="9" fill="#ffffff" stroke="#ffffff" stroke-width="0.3" textLength="52" lengthAdjust="spacing" xml:space="preserve">19 Jan 05:00</text>
<text x="204.7" y="564" font-size="9" fill="#ffffff" stroke="#ffffff" stroke-width="0.3" textLength="52" lengthAdjust="spacing" xml:space="preserve">19 Jan 13:00</text>
<text x="268.7" y="564" font-size="9" fill="#ffffff" stroke="#ffffff" stroke-width="0.3" textLength="52" lengthAdjust="spacing" xml:space="preserve">19 Jan 21:00</text>
<text x="332.7" y="564" font-size="9" fill="#ffffff" stroke="#ffffff" stroke-width="0.3" textLength="52" lengthAdjust="spacing" xml:space="preserve">20 Jan 05:00</text>
<text x="396.7" y="564" font-size="9" fill="#ffffff" stroke="#ffffff" stroke-width="0.3" textLength="52" lengthAdjust="spacing" xml:space="preserve">20 Jan 13:00</text>
<text x="460.7" y="564" font-size="9" fill="#ffffff" stroke="#ffffff" stroke-width="0.3" textLength="52" lengthAdjust="spacing" xml:space="preserve">20 Jan 21:00</text>
<text x="524.7" y="564" font-size="9" fill="#ffffff" stroke="#ffffff" stroke-width="0.3" textLength="52" lengthAdjust="spacing" xml:space="preserve">21 Jan 05:00</text>
<text x="588.7" y="564" font-size="9" fill="#ffffff" stroke="#ffffff" stroke-width="0.3" textLength="52" lengthAdjust="spacing" xml:space="preserve">21 Jan 13:00</text>
<text x="652.7" y="564" font-size="9" fill="#ffffff" stroke="#ffffff" stroke-width="0.3" textLength="52" lengthAdjust="spacing" xml:space="preserve">21 Jan 21:00</text>
<polygon points="16,40 23,40 19.5,44" fill="#ffffff"/>
<text x="28.7" y="44.5" font-size="9" fill="#ffffff" stroke="#ffffff" stroke-width="0.3" textLength="198" lengthAdjust="spacing" xml:space="preserve">USDJPY,H1  144.668 144.755 144.576 144.747</text>
<text x="17.8" y="393" font-size="9" fill="#ffffff" stroke="#ffffff" stroke-width="0.3" textLength="65.5" lengthAdjust="spacing" xml:space="preserve">%R(14) -6.7738</text>
</svg></body></html>
